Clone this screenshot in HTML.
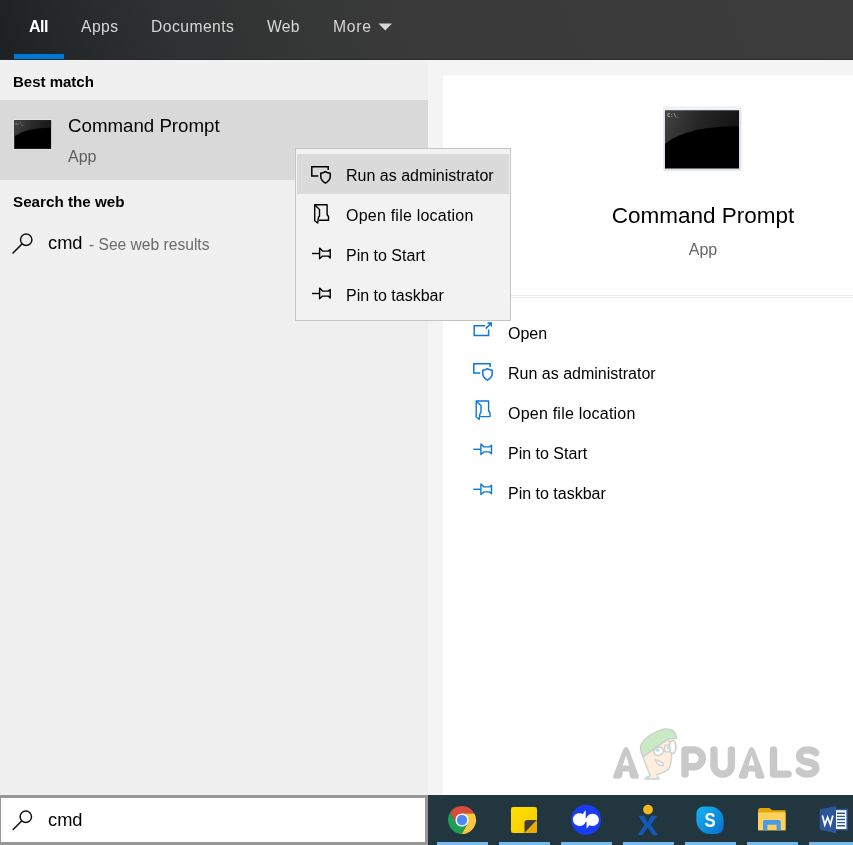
<!DOCTYPE html>
<html><head><meta charset="utf-8">
<style>
*{margin:0;padding:0;box-sizing:border-box}
html,body{width:853px;height:845px;overflow:hidden;background:#f0f0f0;font-family:"Liberation Sans",sans-serif;}
.a{position:absolute;white-space:nowrap;line-height:1;will-change:transform}
#hdr{left:0;top:0;width:853px;height:60px;background:linear-gradient(70deg,#1e2124 0%,#25282a 8%,#2e3031 20%,#353636 35%,#3a3a3a 50%,#3c3c3c 100%);}
.tab{top:18.7px;font-size:15.7px;color:#d6d6d6;letter-spacing:0.45px}
.hd{font-weight:bold;font-size:15px;color:#000}
.mi{font-size:16px;color:#000}
.ai{font-size:16px;color:#000;left:508px}
.ul{top:842px;height:3px;width:51px;background:#76b9ed}
svg.a{overflow:visible}
</style></head><body>
<div id="hdr" class="a"></div>
<div class="a" style="left:0;top:59px;width:853px;height:1px;background:#2a2b2b"></div>
<div class="a" style="left:14px;top:54px;width:50px;height:5px;background:#0078d7"></div>
<div class="a tab" style="left:29px;top:19.3px;font-size:16px;font-weight:bold;color:#fff;letter-spacing:-0.5px">All</div>
<div class="a tab" style="left:81px">Apps</div>
<div class="a tab" style="left:151px">Documents</div>
<div class="a tab" style="left:267px;letter-spacing:0.2px">Web</div>
<div class="a tab" style="left:333px;letter-spacing:0.75px">More</div>
<svg class="a" style="left:378px;top:23px" width="15" height="9"><path d="M0.5 0.5H14L7.25 7.5Z" fill="#d6d6d6"/></svg>

<!-- left panel -->
<div class="a" style="left:0;top:60px;width:428px;height:735px;background:#f0f0f0"></div>
<div class="a hd" style="left:13px;top:74.3px">Best match</div>
<div class="a" style="left:0;top:100px;width:428px;height:80px;background:#d9d9d9"></div>
<svg class="a" style="left:13px;top:118px" width="40" height="33">
 <defs><linearGradient id="g1" x1="0" y1="0" x2="1" y2="0.2"><stop offset="0" stop-color="#484848"/><stop offset="0.5" stop-color="#2a2a2a"/><stop offset="1" stop-color="#181818"/></linearGradient></defs>
 <rect x="0.6" y="0.7" width="38.4" height="31.4" fill="#dfe4ea"/>
 <rect x="1.2" y="2.2" width="36.9" height="28.7" fill="#000"/>
 <path d="M1.2 2.2H38.1V9.8C22 9.8 10 12.5 1.2 18.6Z" fill="url(#g1)"/>
 <text x="2.5" y="6.8" font-size="3.5" fill="#aaa" font-family="Liberation Mono">C:\_</text>
</svg>
<div class="a" style="left:68px;top:117.3px;font-size:18.7px;color:#000">Command Prompt</div>
<div class="a" style="left:68px;top:148.5px;font-size:16px;color:#5e5e5e">App</div>
<div class="a hd" style="left:13px;top:194.3px;font-size:15.2px">Search the web</div>
<svg class="a" style="left:0;top:0" width="1" height="1">
 <circle cx="26.2" cy="239.8" r="5.7" fill="none" stroke="#111" stroke-width="1.5"/>
 <path d="M22 244L13 253" stroke="#111" stroke-width="1.6" stroke-linecap="round"/>
</svg>
<div class="a" style="left:48px;top:233.8px;font-size:18.3px;color:#000">cmd</div>
<div class="a" style="left:89px;top:236.8px;font-size:15.6px;color:#6b6b6b">- See web results</div>

<!-- right -->
<div class="a" style="left:428px;top:60px;width:425px;height:735px;background:#f4f4f4"></div>
<div class="a" style="left:443px;top:75px;width:410px;height:720px;background:#fff"></div>
<svg class="a" style="left:663px;top:106px" width="79" height="65">
 <defs><linearGradient id="g2" x1="0" y1="0" x2="1" y2="0.2"><stop offset="0" stop-color="#444"/><stop offset="0.5" stop-color="#262626"/><stop offset="1" stop-color="#151515"/></linearGradient></defs>
 <rect x="0.4" y="0.7" width="78" height="64" fill="#dde2e8"/>
 <rect x="0.4" y="0.7" width="78" height="4" fill="#eef1f4"/>
 <rect x="2" y="4.6" width="74" height="57.9" fill="#000"/>
 <path d="M2 4.6H76V20.2C44 20.2 18 25 2 38Z" fill="url(#g2)"/>
 <text x="4.3" y="11.2" font-size="5" font-weight="bold" fill="#bbb" font-family="Liberation Mono">C:\_</text>
</svg>
<div class="a" style="left:443px;top:205.2px;width:520px;text-align:center;font-size:22.5px;color:#000;width:520px">Command Prompt</div>
<div class="a" style="left:443px;top:241.9px;width:520px;text-align:center;font-size:16px;color:#666">App</div>
<div class="a" style="left:443px;top:295px;width:410px;height:1px;background:#ececec"></div>
<div class="a" style="left:443px;top:297px;width:410px;height:1px;background:#ececec"></div>

<div class="a ai" style="top:325.5px">Open</div>
<div class="a ai" style="top:365.5px">Run as administrator</div>
<div class="a ai" style="top:405.5px;letter-spacing:0.22px">Open file location</div>
<div class="a ai" style="top:445.5px">Pin to Start</div>
<div class="a ai" style="top:485.5px">Pin to taskbar</div>

<!-- context menu -->
<div class="a" style="left:295px;top:148px;width:216px;height:173px;background:#f2f2f2;border:1px solid #c4c4c4"></div>
<div class="a" style="left:297px;top:154px;width:212px;height:40px;background:#dadada"></div>
<div class="a mi" style="left:346px;top:167.5px">Run as administrator</div>
<div class="a mi" style="left:346px;top:207.5px;letter-spacing:0.22px">Open file location</div>
<div class="a mi" style="left:346px;top:247.5px">Pin to Start</div>
<div class="a mi" style="left:346px;top:287.5px">Pin to taskbar</div>

<!-- bottom search box -->
<div class="a" style="left:0;top:795px;width:428px;height:50px;background:#fff;border:3px solid #979797;border-left-width:1.5px"></div>
<svg class="a" style="left:0;top:0" width="1" height="1">
 <circle cx="25.8" cy="816.7" r="5.7" fill="none" stroke="#111" stroke-width="1.5"/>
 <path d="M21.6 821L13.2 829.5" stroke="#111" stroke-width="1.6" stroke-linecap="round"/>
</svg>
<div class="a" style="left:48px;top:810.9px;font-size:18.3px;color:#000">cmd</div>

<!-- taskbar -->
<div class="a" style="left:428px;top:795px;width:425px;height:50px;background:#22363f"></div>
<div class="a ul" style="left:437px"></div>
<div class="a ul" style="left:499px"></div>
<div class="a ul" style="left:561px"></div>
<div class="a ul" style="left:623px"></div>
<div class="a ul" style="left:685px"></div>
<div class="a ul" style="left:747px"></div>
<div class="a ul" style="left:809px"></div>

<svg class="a" style="left:0;top:0" width="853" height="845" viewBox="0 0 853 845">
 <defs>
  <g id="ishield" fill="none" stroke-width="1.5" stroke-linejoin="miter">
   <path d="M7.3 10H0.8V0.8H17.2V4"/>
   <path d="M9.8 7.2C11.8 7.2 13.2 6.5 14.4 5.6C15.6 6.5 17 7.2 19.2 7.2V10.8C19.2 13.6 17 15.6 14.4 17.2C11.8 15.6 9.8 13.6 9.8 10.8Z"/>
  </g>
  <g id="ifolder" fill="none" stroke-width="1.4" stroke-linejoin="round">
   <path d="M0.7 0.7H13.1V10.7L14.5 12.5V16.3H4.8"/>
   <path d="M0.7 0.7V16.7L3.7 19L4.4 13.5L5.5 12V5.5Z"/>
  </g>
  <g id="ipin" fill="none" stroke-width="1.4" stroke-linejoin="round">
   <path d="M0 5.3H7.6"/>
   <path d="M7.6 -0.1L10.6 2.9H16.3L18.2 1.3V9.8L16.3 7.9H10.6L7.6 10.6Z"/>
  </g>
 </defs>
 <!-- context menu icons -->
 <g stroke="#000">
  <use href="#ishield" x="311" y="166"/>
  <use href="#ifolder" x="314" y="204"/>
  <use href="#ipin" x="312" y="248.2"/>
  <use href="#ipin" x="312" y="288.2"/>
 </g>
 <!-- panel icons -->
 <g stroke="#0a78d6">
  <g fill="none" stroke-width="1.5">
   <path d="M485.3 325.8H474.2V335.4H488.6V329.6"/>
   <path d="M485.8 328.6L491 323.3M487.6 323H491.3V326.6"/>
  </g>
  <use href="#ishield" x="473" y="363"/>
  <use href="#ifolder" x="475.5" y="400.3"/>
  <use href="#ipin" x="473.3" y="444"/>
  <use href="#ipin" x="473.3" y="484"/>
 </g>
</svg>

<svg class="a" style="left:0;top:0" width="853" height="845" viewBox="0 0 853 845">
 <defs>
  <linearGradient id="sk" x1="0" y1="0" x2="1" y2="1"><stop offset="0" stop-color="#13b6f3"/><stop offset="1" stop-color="#0a6fcf"/></linearGradient>
  <linearGradient id="st" x1="0" y1="0" x2="1" y2="1"><stop offset="0" stop-color="#ffe100"/><stop offset="1" stop-color="#f8c800"/></linearGradient>
 </defs>
 <!-- chrome -->
 <path d="M462.00 813.40L474.35 813.40A14 14 0 0 0 450.11 812.61L456.28 823.30L462 820Z" fill="#d94a3a"/>
 <path d="M467.72 823.30L461.54 833.99A14 14 0 0 0 474.35 813.40L462.00 813.40L462 820Z" fill="#fbc740"/>
 <path d="M456.28 823.30L450.11 812.61A14 14 0 0 0 461.54 833.99L467.72 823.30L462 820Z" fill="#1f9d55"/>
 <circle cx="462" cy="820" r="6.6" fill="#fff"/>
 <circle cx="462" cy="820" r="5.2" fill="#4a89f0"/>
 <!-- sticky notes -->
 <rect x="511" y="807" width="26" height="26" rx="2" fill="url(#st)"/>
 <path d="M524.5 833V822.5Q524.5 820 527 820H537Z" fill="#3e3e3e"/>
 <path d="M537 820V831Q537 833 535 833H524.5Z" fill="#e9ab06"/>
 <!-- blue circle app -->
 <circle cx="586.1" cy="819.8" r="15" fill="#1b3cf6"/>
 <path d="M585.7 809.9V822C584.5 824.6 582.5 825.9 579.5 825.9C575.8 825.9 572.9 823.2 572.9 819.6C572.9 816 575.8 813.3 579.5 813.3C580.8 813.3 582 813.5 582.8 813.9Z" fill="#fff"/>
 <path d="M586.6 828.8V817.6C587.8 815 589.8 813.7 592.6 813.7C596.2 813.7 598.9 816.6 598.9 819.8C598.9 823.2 596.2 825.9 592.6 825.9C591.3 825.9 590.2 825.7 589.4 825.3Z" fill="#fff"/>
 <rect x="585" y="818.2" width="2.4" height="3.6" fill="#fff"/>
 <!-- x app -->
 <circle cx="648" cy="809.6" r="4.9" fill="#f5b51e"/>
 <path d="M638.2 815.8H644.2L647.7 822.6L651.2 815.8H657.2L650.8 825L658.1 834.9H652.9L647.7 827.4L642.4 834.9H637.6L644.6 825Z" fill="#1359b8"/>
 <!-- skype -->
 <path d="M703.5 806.4H710A13.6 13.6 0 0 1 723.6 820V826.5A7.4 7.4 0 0 1 716.2 833.9H710A13.6 13.6 0 0 1 696.4 820.3V813.5A7.1 7.1 0 0 1 703.5 806.4Z" fill="url(#sk)"/>
 <text x="0" y="0" transform="translate(710.2 827.3) scale(0.84 1)" text-anchor="middle" font-family="Liberation Sans" font-weight="bold" font-size="20" fill="#fff">S</text>
 <!-- folder -->
 <path d="M758 810.5Q758 808 760.5 808H769.5L772 810.3H785.5V830.3H758Z" fill="#e8a40a"/>
 <path d="M758 812.5H785.5V830.3H758Z" fill="#fcd25c"/>
 <path d="M763 830.3V822Q763 820 765 820H778.8Q780.8 820 780.8 822V830.3H776.6V824.8H767.4V830.3Z" fill="#4a9ae5"/>
 <!-- word -->
 <path d="M834.5 809.5H847.2V829.8H834.5Z" fill="#fff" stroke="#2b579a" stroke-width="1.6"/>
 <path d="M837 813.3H845M837 816.4H845M837 819.5H845M837 822.6H845M837 825.7H845" stroke="#2b579a" stroke-width="1.4"/>
 <path d="M819.8 809.5L836 806V833.3L819.8 829.8Z" fill="#2b579a"/>
 <path d="M822.4 815.5L824.8 824.8L827.6 817.2L830.4 824.8L832.8 815.5" fill="none" stroke="#fff" stroke-width="1.7" stroke-linejoin="miter"/>
</svg>
<svg class="a" style="left:0;top:0" width="853" height="845" viewBox="0 0 853 845">
 <g fill="none" stroke="#c9c9c9" stroke-width="7.4" stroke-linecap="round" stroke-linejoin="round">
  <path d="M685 774V749.9H693.85A8.45 8.45 0 0 1 693.85 766.8H685"/>
  <path d="M714 749.9V765.4A8.7 8.7 0 0 0 731.4 765.4V749.9"/>
  <path d="M773.5 749.9V774.1H788.1"/>
  <path d="M815.6 752.6C813.6 750.7 810.6 749.9 807.6 749.9C803 749.9 799.5 752.4 799.5 756C799.5 759.6 802.5 761.2 807.6 762C812.7 762.8 815.9 764.6 815.9 768.1C815.9 771.7 812.2 774.1 807.6 774.1C804 774.1 801 772.9 799.2 770.8"/>
 </g>
 <path fill-rule="evenodd" fill="#c9c9c9" d="M613.3 775.5L623.2 749.3Q626 744.8 628.8 749.3L638.7 775.5Q639.5 778.7 636.2 778.7H632.6Q630.4 778.7 629.9 776.6L629 771.5H623L622.1 776.6Q621.6 778.7 619.4 778.7H615.8Q612.5 778.7 613.3 775.5ZM622.8 765.6H629.2L626 755.5Z"/><path fill-rule="evenodd" fill="#c9c9c9" d="M738.9 775.5L748.8 749.3Q751.6 744.8 754.4 749.3L764.3 775.5Q765.1 778.7 761.8 778.7H758.2Q756 778.7 755.5 776.6L754.6 771.5H748.6L747.7 776.6Q747.2 778.7 745 778.7H741.4Q738.1 778.7 738.9 775.5ZM748.4 765.6H754.8L751.6 755.5Z"/>
 <!-- face -->
 <path d="M657 774.5C661 773.5 665.5 772 668.7 769C670.5 766 671.7 760 671.7 753C671.7 746 670 741 667.5 739.2L643 756.8C644.8 763 647.8 770 650.3 775.8L644.5 779H658.8Z" fill="#fdeedd" stroke="#d0d0d0" stroke-width="1.3"/>
 <path d="M640.4 747.5C640.2 742 650 733 662 729.5C670 727.4 676.6 731 676.3 738.7C672.5 738.6 669 738.8 667.5 739.2L643 756.8C641.4 754 640.5 750.5 640.4 747.5Z" fill="#c8eac4" stroke="#cdcdcd" stroke-width="1.3"/>
 <ellipse cx="672.6" cy="747" rx="3.4" ry="6.4" fill="#fff" stroke="#cfcfcf" stroke-width="1.5"/>
 <ellipse cx="658.6" cy="751.3" rx="4.8" ry="4" transform="rotate(-25 658.6 751.3)" fill="#fff" stroke="#cecece" stroke-width="1.5"/>
 <ellipse cx="667.3" cy="748.4" rx="2.8" ry="3.5" fill="#fff" stroke="#cecece" stroke-width="1.4"/>
 <ellipse cx="657.5" cy="750" rx="2.2" ry="1.5" fill="#b5dcea"/>
 <ellipse cx="668" cy="747.8" rx="1.3" ry="1.6" fill="#b5dcea"/>
 <path d="M655.2 759.6Q657.5 766.5 663.4 765.6L662.6 762.6Z" fill="#fff" stroke="#cecece" stroke-width="1.3"/>
 <path d="M644.3 779L647.3 775.6L650.6 779ZM655.2 779L657.6 775.8L660 779Z" fill="#b8e0f0"/>
 </svg>
</body></html>
